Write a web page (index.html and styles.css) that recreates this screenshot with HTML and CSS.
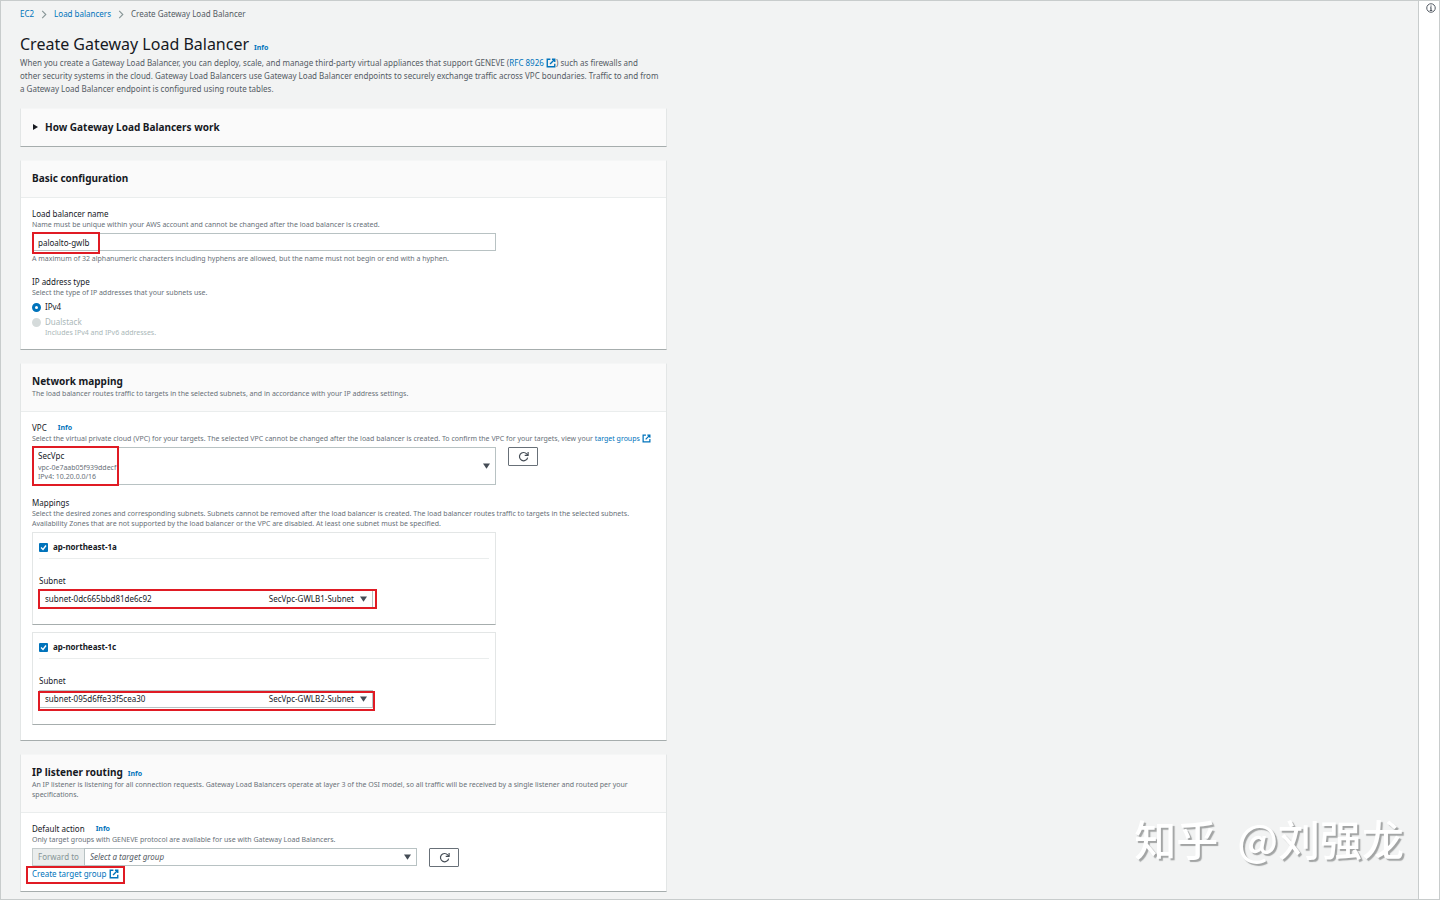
FILE: index.html
```
<!DOCTYPE html>
<html lang="en">
<head>
    <meta charset="UTF-8">
    <meta name="viewport" content="width=device-width, initial-scale=1.0">
    <title>Create Gateway Load Balancer</title>
    <link rel="stylesheet" href="styles.css">
</head>
<body>
    <!-- Shared icons -->
    <svg class="sprite" aria-hidden="true">
        <symbol id="external" viewBox="0 0 16 16">
            <path d="M7 2H2v12h12V9M9.500 2H14v4.500M14 2L6.500 9.500" fill="none" stroke="currentColor" stroke-width="2.200"/>
        </symbol>
        <symbol id="refresh" viewBox="0 0 16 16">
            <path d="M14 9.500A6 6 0 1 1 12.600 4.200L14.500 6" fill="none" stroke="currentColor" stroke-width="1.700"/>
            <path d="M14.700 1.500V6.300H9.800" fill="none" stroke="currentColor" stroke-width="1.700"/>
        </symbol>
        <symbol id="caret" viewBox="0 0 8 6">
            <path d="M0 0h8L4 6z" fill="currentColor"/>
        </symbol>
        <symbol id="chevron" viewBox="0 0 6 10">
            <path d="M1 1l4 4-4 4" fill="none" stroke="currentColor" stroke-width="1.200"/>
        </symbol>
    </svg>

    <main>
        <nav class="breadcrumb" aria-label="Breadcrumb">
            <a href="#">EC2</a>
            <svg><use href="#chevron"/></svg>
            <a href="#">Load balancers</a>
            <svg><use href="#chevron"/></svg>
            <span>Create Gateway Load Balancer</span>
        </nav>

        <form class="content">
            <header class="intro">
                <div class="title-row">
                    <h1>Create Gateway Load Balancer</h1>
                    <a href="#" class="info">Info</a>
                </div>
                <p>When you create a Gateway Load Balancer, you can deploy, scale, and manage third-party virtual appliances that support GENEVE (<a href="#">RFC 8926 <svg class="ext"><use href="#external"/></svg></a>) such as firewalls and<br>
                other security systems in the cloud. Gateway Load Balancers use Gateway Load Balancer endpoints to securely exchange traffic across VPC boundaries. Traffic to and from<br>
                a Gateway Load Balancer endpoint is configured using route tables.</p>
            </header>

            <details class="card">
                <summary><svg viewBox="0 0 5 6"><path d="M0 0l5 3-5 3z" fill="currentColor"/></svg>How Gateway Load Balancers work</summary>
            </details>

            <section class="card">
                <div class="card-header">
                    <h2>Basic configuration</h2>
                </div>
                <div class="card-body">
                    <div class="field">
                        <label for="lb-name">Load balancer name</label>
                        <p class="hint">Name must be unique within your AWS account and cannot be changed after the load balancer is created.</p>
                        <div class="control wide">
                            <input type="text" id="lb-name" value="paloalto-gwlb">
                            <span class="mark mark-name"></span>
                        </div>
                        <p class="hint">A maximum of 32 alphanumeric characters including hyphens are allowed, but the name must not begin or end with a hyphen.</p>
                    </div>
                    <fieldset class="field">
                        <legend>IP address type</legend>
                        <p class="hint">Select the type of IP addresses that your subnets use.</p>
                        <label class="choice"><input type="radio" name="ip-type" checked>IPv4</label>
                        <label class="choice disabled"><input type="radio" name="ip-type" disabled>Dualstack</label>
                        <p class="hint choice-hint">Includes IPv4 and IPv6 addresses.</p>
                    </fieldset>
                </div>
            </section>

            <section class="card">
                <div class="card-header">
                    <h2>Network mapping</h2>
                    <p class="hint">The load balancer routes traffic to targets in the selected subnets, and in accordance with your IP address settings.</p>
                </div>
                <div class="card-body">
                    <div class="field">
                        <div class="label-row"><label for="vpc">VPC</label><a href="#" class="info">Info</a></div>
                        <p class="hint">Select the virtual private cloud (VPC) for your targets. The selected VPC cannot be changed after the load balancer is created. To confirm the VPC for your targets, view your <a href="#">target groups <svg class="ext"><use href="#external"/></svg></a></p>
                        <div class="row">
                            <div class="control wide vpc">
                                <select id="vpc"><option>SecVpc</option></select>
                                <div class="vpc-details">vpc-0e7aab05f939ddecf<br>IPv4: 10.20.0.0/16</div>
                                <svg class="caret"><use href="#caret"/></svg>
                                <span class="mark mark-vpc"></span>
                            </div>
                            <button type="button" class="refresh" aria-label="Refresh VPCs"><svg><use href="#refresh"/></svg></button>
                        </div>
                    </div>
                    <fieldset class="field">
                        <legend>Mappings</legend>
                        <p class="hint">Select the desired zones and corresponding subnets. Subnets cannot be removed after the load balancer is created. The load balancer routes traffic to targets in the selected subnets. Availability Zones that are not supported by the load balancer or the VPC are disabled. At least one subnet must be specified.</p>
                        <div class="zones">
                            <div class="zone">
                                <label class="zone-name"><input type="checkbox" checked>ap-northeast-1a</label>
                                <label for="subnet-a">Subnet</label>
                                <div class="control subnet">
                                    <select id="subnet-a"><option>subnet-0dc665bbd81de6c92</option></select>
                                    <span class="subnet-name">SecVpc-GWLB1-Subnet</span>
                                    <svg class="caret"><use href="#caret"/></svg>
                                    <span class="mark mark-subnet-a"></span>
                                </div>
                            </div>
                            <div class="zone">
                                <label class="zone-name"><input type="checkbox" checked>ap-northeast-1c</label>
                                <label for="subnet-c">Subnet</label>
                                <div class="control subnet">
                                    <select id="subnet-c"><option>subnet-095d6ffe33f5cea30</option></select>
                                    <span class="subnet-name">SecVpc-GWLB2-Subnet</span>
                                    <svg class="caret"><use href="#caret"/></svg>
                                    <span class="mark mark-subnet-c"></span>
                                </div>
                            </div>
                        </div>
                    </fieldset>
                </div>
            </section>

            <section class="card">
                <div class="card-header">
                    <div class="title-row">
                        <h2>IP listener routing</h2>
                        <a href="#" class="info">Info</a>
                    </div>
                    <p class="hint">An IP listener is listening for all connection requests. Gateway Load Balancers operate at layer 3 of the OSI model, so all traffic will be received by a single listener and routed per your specifications.</p>
                </div>
                <div class="card-body">
                    <div class="field">
                        <div class="label-row"><label for="target">Default action</label><a href="#" class="info">Info</a></div>
                        <p class="hint">Only target groups with GENEVE protocol are available for use with Gateway Load Balancers.</p>
                        <div class="row">
                            <div class="target">
                                <span class="addon">Forward to</span>
                                <div class="control">
                                    <select id="target" class="placeholder"><option>Select a target group</option></select>
                                    <svg class="caret"><use href="#caret"/></svg>
                                </div>
                            </div>
                            <button type="button" class="refresh" aria-label="Refresh target groups"><svg><use href="#refresh"/></svg></button>
                        </div>
                        <a href="#" class="create-link">Create target group <svg class="ext"><use href="#external"/></svg><span class="mark mark-link"></span></a>
                    </div>
                </div>
            </section>
        </form>
    </main>

    <aside>
        <button type="button" aria-label="Open help panel">
            <svg viewBox="0 0 16 16"><circle cx="8" cy="8" r="6.800" fill="none" stroke="currentColor" stroke-width="1.600"/><path d="M8 4v2M6.500 7.500H8V12M6 12h4" fill="none" stroke="currentColor" stroke-width="1.800"/></svg>
        </button>
    </aside>

    <div class="watermark" lang="zh-CN">知乎&nbsp; @刘强龙</div>
</body>
</html>
```
FILE: styles.css
```
* {
    box-sizing: border-box;
}

body {
    margin: 0;
    min-height: 100vh;
    display: grid;
    grid-template-columns: 1fr 21px;
    border: 1px solid #c8cccc;
    background: #f2f3f3;
    color: #16191f;
    font-family: "Noto Sans", "Open Sans", sans-serif;
    font-size: 8px;
    line-height: 12px;
}

h1, h2, p, fieldset, legend {
    margin: 0;
    padding: 0;
    border: 0;
}

a {
    color: #0073bb;
    text-decoration: none;
}

input, select, button {
    font: inherit;
    color: inherit;
    margin: 0;
    border-radius: 0;
}

.sprite {
    position: absolute;
    width: 0;
    height: 0;
}

main {
    padding: 7px 19px 5px;
    min-width: 0;
}

.breadcrumb {
    display: flex;
    align-items: center;
    gap: 7px;
    color: #545b64;
}

.breadcrumb svg {
    width: 6px;
    height: 9px;
    color: #879596;
}

.content {
    display: flex;
    flex-direction: column;
    gap: 13px;
    max-width: 647px;
    margin-top: 14px;
}

.intro p {
    margin-top: 2px;
    color: #545b64;
    line-height: 13px;
}

.title-row {
    display: flex;
    align-items: baseline;
    gap: 5px;
}

h1 {
    font-size: 16px;
    font-weight: 400;
    line-height: 20px;
}

h2, summary {
    font-size: 10px;
    font-weight: 700;
    line-height: 14px;
}

.info {
    font-size: 7px;
    font-weight: 700;
}

.title-row .info {
    line-height: 8px;
}

.ext {
    width: 10px;
    height: 10px;
    vertical-align: -2px;
}

/* Cards */
.card {
    background: #fff;
    border: 1px solid #e3e6e6;
    border-top-color: #f5f6f6;
    border-bottom-color: #a6adad;
}

summary {
    display: flex;
    align-items: center;
    gap: 7px;
    padding: 11px 12px 12px;
    background: #fafafa;
    list-style: none;
}

summary svg {
    width: 5px;
    height: 6px;
}

.card-header {
    padding: 10px 11px 12px;
    background: #fafafa;
    border-bottom: 1px solid #eaeded;
}

.card-header .hint {
    margin-top: 1px;
}

.card-body {
    display: flex;
    flex-direction: column;
    gap: 12px;
    padding: 10px 11px 11px;
}

.hint {
    color: #687078;
    font-size: 7px;
    line-height: 10px;
}

.hint .ext {
    width: 9px;
    height: 9px;
}

.field label, legend {
    display: block;
}

.label-row {
    display: flex;
    gap: 11px;
}

.row {
    display: flex;
    align-items: flex-start;
    gap: 12px;
}

/* Controls */
.control {
    position: relative;
    margin: 3px 0;
}

.wide {
    width: 464px;
}

.control input, .control select {
    display: block;
    width: 100%;
    height: 18px;
    padding: 0 5px;
    background: #fff;
    border: 1px solid #b8c2c3;
    appearance: none;
}

.caret {
    position: absolute;
    top: 50%;
    right: 6px;
    width: 7px;
    height: 6px;
    margin-top: -3px;
    color: #444c55;
    pointer-events: none;
}

.vpc {
    margin-bottom: 0;
}

.control.vpc select {
    height: 38px;
    padding-bottom: 20px;
}

.vpc-details {
    position: absolute;
    top: 16px;
    left: 6px;
    width: 80px;
    overflow: hidden;
    color: #687078;
    font-size: 7px;
    line-height: 9px;
    pointer-events: none;
}

.refresh {
    display: flex;
    align-items: center;
    justify-content: center;
    width: 30px;
    height: 19px;
    margin-top: 3px;
    padding: 0;
    background: #fff;
    border: 1px solid #687078;
    border-radius: 1px;
    color: #444c55;
}

.refresh svg {
    width: 11px;
    height: 11px;
}

.field .choice {
    display: flex;
    align-items: center;
    gap: 4px;
    margin-top: 3px;
}

.choice input {
    width: 9px;
    height: 9px;
    appearance: none;
    background: #fff;
    border: 3px solid #0073bb;
    border-radius: 50%;
}

.choice.disabled, .choice-hint {
    color: #aab7b8;
}

.choice.disabled input {
    background: #d5dbdb;
    border-color: #d5dbdb;
}

.choice-hint {
    margin-left: 13px;
}

/* Availability zones */
.zones {
    display: flex;
    flex-direction: column;
    gap: 7px;
    width: 464px;
    margin: 3px 0 4px;
}

.zone {
    padding: 8px 6px 13px;
    border: 1px solid #e3e6e6;
    border-bottom-color: #a6adad;
}

.zone .zone-name {
    display: flex;
    align-items: center;
    gap: 5px;
    margin-bottom: 16px;
    padding-bottom: 5px;
    border-bottom: 1px solid #eaeded;
    font-weight: 700;
}

.zone-name input {
    width: 9px;
    height: 9px;
    appearance: none;
    border-radius: 1px;
    background: #0073bb url("data:image/svg+xml,%3Csvg xmlns='http://www.w3.org/2000/svg' viewBox='0 0 9 9'%3E%3Cpath d='M2 4.500l2 2 3-4' fill='none' stroke='white' stroke-width='1.300'/%3E%3C/svg%3E");
}

.subnet {
    width: 334px;
}

.subnet-name {
    position: absolute;
    top: 3px;
    right: 19px;
    pointer-events: none;
}

/* Default action */
.target {
    display: flex;
    width: 385px;
}

.target .control {
    flex: 1;
    margin-bottom: 2px;
}

.addon {
    height: 18px;
    margin-top: 3px;
    padding: 2px 5px;
    background: #eaeded;
    border: 1px solid #c5cccc;
    border-right: 0;
    color: #879596;
}

.control .placeholder {
    color: #545b64;
    font-style: italic;
}

.create-link {
    position: relative;
    display: inline-block;
}

/* Red highlight frames */
.mark {
    position: absolute;
    border: 2px solid #e01b24;
    pointer-events: none;
}

.mark-name {
    inset: -1px auto -3px 0;
    width: 68px;
}

.mark-vpc {
    inset: -1px auto -1px 0;
    width: 87px;
}

.mark-subnet-a {
    inset: -1px -4px -1px -1px;
}

.mark-subnet-c {
    inset: 1px -2px -3px -1px;
}

.mark-link {
    inset: -2px -6px -4px -6px;
}

/* Help panel rail */
aside {
    background: #fff;
    border-left: 1px solid #c8cccc;
}

aside button {
    padding: 2px 0 0 7px;
    background: none;
    border: 0;
    color: #545b64;
}

aside svg {
    display: block;
    width: 10px;
    height: 10px;
}

.watermark {
    position: fixed;
    right: 36px;
    bottom: 32px;
    color: #fff;
    font-family: "Noto Sans CJK SC", sans-serif;
    font-size: 42px;
    font-weight: 500;
    line-height: 60px;
    text-shadow: 2px 2px 1px #a2a4a4;
}
```
